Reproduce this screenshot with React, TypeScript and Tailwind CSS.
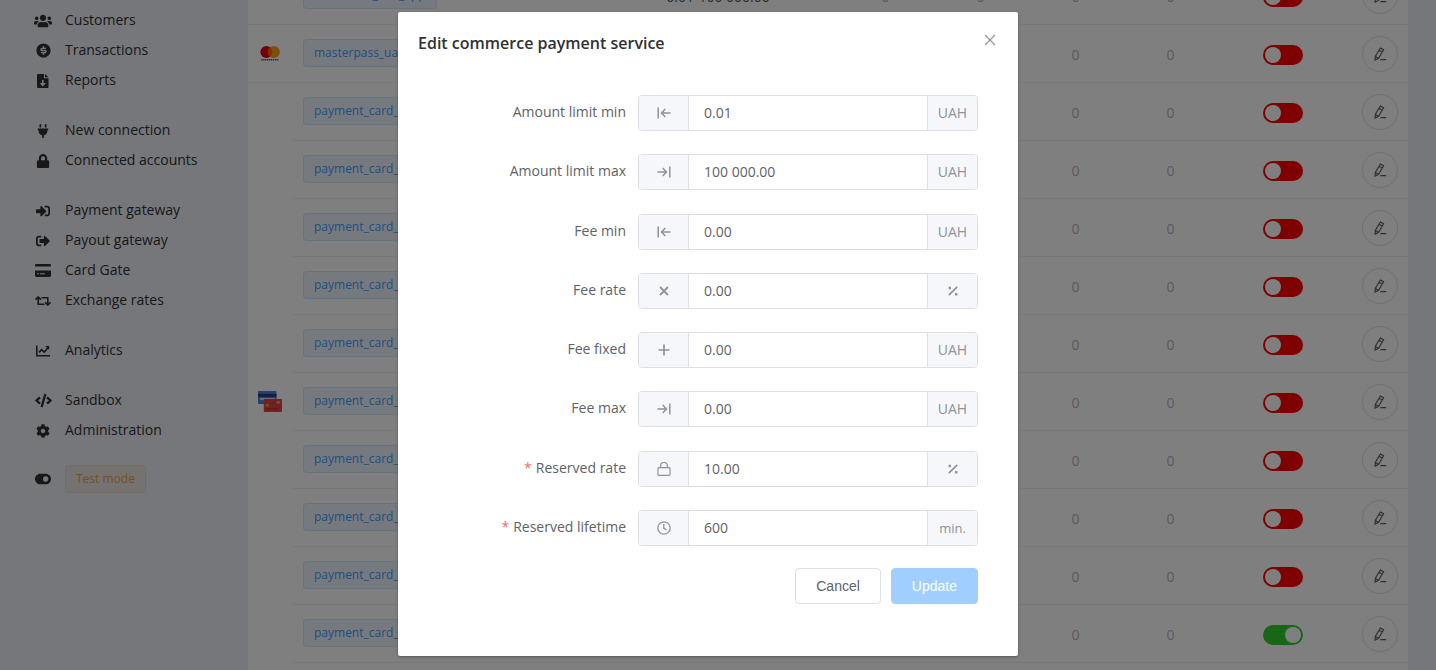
import { useState } from "react";
import type { ReactNode } from "react";
import {
  FaUsers,
  FaPlug,
  FaLock,
  FaSignInAlt,
  FaSignOutAlt,
  FaRetweet,
  FaCode,
  FaCog,
} from "react-icons/fa";
import { FaToggleOn } from "react-icons/fa6";
import { RiMoneyDollarCircleFill } from "react-icons/ri";

function ReportIcon() {
  return (
    <svg viewBox="0 0 12 14" className="h-3.5 w-3" fill="currentColor">
      <path
        fillRule="evenodd"
        d="M1 0h6v4.2h4.5V13a1 1 0 0 1-1 1H1a1 1 0 0 1-1-1V1a1 1 0 0 1 1-1zM5 6v3H2.6L5.8 12.4 9 9H6.6V6z"
      />
      <path d="M8 0l3.5 3.3H8z" />
    </svg>
  );
}

function CardIcon() {
  return (
    <svg viewBox="0 0 16 13" className="h-[13px] w-4" fill="currentColor">
      <path d="M0 2.6V1.2Q0 0 1.2 0h13.6Q16 0 16 1.2v1.4z" />
      <path
        fillRule="evenodd"
        d="M0 6.4h16v5.2q0 1.4-1.2 1.4H1.2Q0 13 0 11.6zM2 9.2v1.1h2V9.2zM5 9.2v1.1h5V9.2z"
      />
    </svg>
  );
}

function TrendIcon() {
  return (
    <svg viewBox="0 0 14 12" className="h-3 w-3.5" fill="none" stroke="currentColor" strokeWidth="1.6">
      <path d="M.8.5v10.2H14" />
      <path d="M3 7.4l2.6-2.8 2.6 2.4 3.6-4" />
      <path d="M9.2 1h4v4z" fill="currentColor" stroke="none" />
    </svg>
  );
}

function MinIcon() {
  return (
    <svg viewBox="0 0 14 14" className="size-3.5" fill="none" stroke="currentColor" strokeWidth="1.5">
      <path d="M1.2 1.5v11M13.5 7H4.6M8.3 3L4.5 7l3.8 4" />
    </svg>
  );
}

function MaxIcon() {
  return (
    <svg viewBox="0 0 14 14" className="size-3.5" fill="none" stroke="currentColor" strokeWidth="1.5">
      <path d="M12.8 1.5v11M.5 7h8.9M5.7 3l3.8 4-3.8 4" />
    </svg>
  );
}

function TimesIcon() {
  return (
    <svg viewBox="0 0 14 14" className="size-3.5" fill="none" stroke="currentColor" strokeWidth="1.8">
      <path d="M3 3l8 8M11 3l-8 8" />
    </svg>
  );
}

function PlusIcon() {
  return (
    <svg viewBox="0 0 14 14" className="size-3.5" fill="none" stroke="currentColor" strokeWidth="1.7">
      <path d="M7 1.5v11M1.5 7h11" />
    </svg>
  );
}

function LockIcon() {
  return (
    <svg viewBox="0 0 14 14" className="size-3.5" fill="none" stroke="currentColor" strokeWidth="1.2">
      <rect x="1" y="5.6" width="12" height="7.8" rx=".8" />
      <path d="M3.6 5.6V3.9a3.4 3.4 0 0 1 6.8 0v1.7" />
    </svg>
  );
}

function ClockIcon() {
  return (
    <svg viewBox="0 0 14 14" className="size-3.5" fill="none" stroke="currentColor" strokeWidth="1.3">
      <circle cx="7" cy="7" r="6.2" />
      <path d="M6.8 3v4.3l2.6 1.6" />
    </svg>
  );
}

function PercentIcon() {
  return (
    <svg viewBox="0 0 14 14" className="size-3.5" fill="none" stroke="currentColor" strokeWidth="1.7">
      <path d="M11.2 2.8l-8.4 8.4" />
      <path d="M2.6 2.8h2.4v2.4H2.6zM9 9h2.4v2.4H9z" fill="currentColor" stroke="none" />
    </svg>
  );
}

function PencilIcon() {
  return (
    <svg viewBox="0 0 14 14" className="size-3.5" fill="none" stroke="currentColor" strokeWidth="1.2">
      <path d="M7.4 1l3.2 1.8-5 8.5-3.5 1.8.2-3.6zM6.1 3.3l3.2 1.8M2.3 9.5l3.3 1.8M7.4 12.7H13.2" />
    </svg>
  );
}

function MastercardLogo() {
  return (
    <svg viewBox="0 0 24 24" className="size-6">
      <circle cx="8.4" cy="10" r="6" fill="#eb001b" />
      <circle cx="15.8" cy="10" r="6" fill="#f79e1b" />
      <path d="M12.1 5.3a6 6 0 0 1 0 9.4a6 6 0 0 1 0-9.4z" fill="#ff5f00" />
      <path d="M3.4 17.8h17.4" stroke="#444" strokeWidth="1.6" strokeDasharray="1.2 .7" />
    </svg>
  );
}

function CardsLogo() {
  return (
    <svg viewBox="0 0 24 24" className="size-6">
      <rect x="0" y="1" width="18.5" height="13" rx="1" fill="#4c80d8" />
      <rect x="0" y="3.9" width="18.5" height="3.2" fill="#303c80" />
      <rect x="2" y="7.9" width="15" height="2.2" fill="#c6d4f0" />
      <rect x="5.8" y="9" width="18.2" height="13" rx="1" fill="#e04340" />
      <rect x="8" y="14.1" width="3" height="2.4" fill="#d8a838" />
      <ellipse cx="20.4" cy="12.3" rx="2.2" ry="1.4" fill="#e8a090" />
      <path d="M8 18.9h12" stroke="#b03038" strokeWidth="1" />
    </svg>
  );
}

const menu: { label: string; icon: ReactNode }[][] = [
  [
    { label: "Customers", icon: <FaUsers className="size-[18px]" /> },
    { label: "Transactions", icon: <RiMoneyDollarCircleFill className="size-[17px]" /> },
    { label: "Reports", icon: <ReportIcon /> },
  ],
  [
    { label: "New connection", icon: <FaPlug className="size-3.5" /> },
    { label: "Connected accounts", icon: <FaLock className="size-3.5" /> },
  ],
  [
    { label: "Payment gateway", icon: <FaSignInAlt className="size-3.5" /> },
    { label: "Payout gateway", icon: <FaSignOutAlt className="size-3.5" /> },
    { label: "Card Gate", icon: <CardIcon /> },
    { label: "Exchange rates", icon: <FaRetweet className="size-4" /> },
  ],
  [{ label: "Analytics", icon: <TrendIcon /> }],
  [
    { label: "Sandbox", icon: <FaCode className="size-[17px]" /> },
    { label: "Administration", icon: <FaCog className="size-3.5" /> },
  ],
];

function Sidebar() {
  return (
    <nav className="w-62 shrink-0 bg-[#edeff6] pt-[5px] text-[#303133]">
      {menu.map((group, i) => (
        <ul key={i} className="mb-5">
          {group.map((item) => (
            <li key={item.label}>
              <a href="#" className="flex h-[30px] items-center pl-[33px] text-sm">
                <span className="mr-3 flex w-5 justify-center pt-px">{item.icon}</span>
                {item.label}
              </a>
            </li>
          ))}
        </ul>
      ))}
      <div className="flex items-center pl-[33px]">
        <span className="mr-3 flex w-5 justify-center">
          <FaToggleOn className="size-4" />
        </span>
        <span className="h-7 rounded border border-[#e6a23c]/20 bg-[#e6a23c]/10 px-2.5 text-xs leading-[26px] text-[#e6a23c]">
          Test mode
        </span>
      </div>
    </nav>
  );
}

type Service = { code: string; logo?: ReactNode; span?: number; on?: boolean };

const services: Service[] = [
  { code: "monocash_uah_app", span: 1 },
  { code: "masterpass_uah", logo: <MastercardLogo />, span: 1 },
  { code: "payment_card_eur", logo: <CardsLogo />, span: 11 },
  { code: "payment_card_gbp" },
  { code: "payment_card_kzt" },
  { code: "payment_card_pln" },
  { code: "payment_card_rub" },
  { code: "payment_card_try" },
  { code: "payment_card_usd" },
  { code: "payment_card_uzs" },
  { code: "payment_card_azn" },
  { code: "payment_card_uah", on: true },
  { code: "payment_card_byn" },
];

const cell = "border-b border-[#ebeef5]";

function ServiceTable() {
  return (
    <table className="-mt-[33px] w-full table-fixed border-separate border-spacing-0 bg-white text-center text-sm text-[#b4b6bb]">
      <colgroup>
        <col className="w-[45px]" />
        <col className="w-[305px]" />
        <col />
        <col className="w-[95px]" />
        <col className="w-[95px]" />
        <col className="w-[95px]" />
        <col className="w-[95px]" />
        <col className="w-[130px]" />
        <col className="w-[60px]" />
      </colgroup>
      <tbody>
        {services.map((s) => (
          <tr key={s.code} className="h-[58px]">
            {s.span && (
              <td rowSpan={s.span} className={`${cell} pr-0.5`}>
                <span className="flex justify-center">{s.logo}</span>
              </td>
            )}
            <td className={`${cell} pb-0.5 pl-2.5 text-left`}>
              <span className="inline-block h-7 rounded border border-[#409eff]/20 bg-[#409eff]/10 px-2.5 align-middle text-xs leading-[26px] text-[#409eff]">
                {s.code}
              </span>
            </td>
            <td className={`${cell} pt-0.5 text-[#606266]`}>0.01-100 000.00</td>
            <td className={`${cell} pt-0.5`}>0</td>
            <td className={`${cell} pt-0.5`}>0</td>
            <td className={`${cell} pt-0.5`}>0</td>
            <td className={`${cell} pt-0.5`}>0</td>
            <td className={`${cell} pt-0.5`}>
              <button
                type="button"
                role="switch"
                aria-checked={!!s.on}
                aria-label={`Enable ${s.code}`}
                className={`inline-flex h-5 w-10 items-center rounded-full px-0.5 align-middle ${
                  s.on ? "justify-end bg-[#32cd32]" : "justify-start bg-[#ff0000]"
                }`}
              >
                <span className="size-4 rounded-full bg-white" />
              </button>
            </td>
            <td className={`${cell} pl-1`}>
              <button
                type="button"
                aria-label={`Edit ${s.code}`}
                className="inline-flex size-9 items-center justify-center rounded-full border border-[#dcdfe6] align-middle text-[#606266]"
              >
                <PencilIcon />
              </button>
            </td>
          </tr>
        ))}
      </tbody>
    </table>
  );
}

type Field = { id: string; label: string; value: string; icon: ReactNode; unit: ReactNode; required?: boolean };

const fields: Field[] = [
  { id: "amount-min", label: "Amount limit min", value: "0.01", icon: <MinIcon />, unit: "UAH" },
  { id: "amount-max", label: "Amount limit max", value: "100 000.00", icon: <MaxIcon />, unit: "UAH" },
  { id: "fee-min", label: "Fee min", value: "0.00", icon: <MinIcon />, unit: "UAH" },
  { id: "fee-rate", label: "Fee rate", value: "0.00", icon: <TimesIcon />, unit: <PercentIcon /> },
  { id: "fee-fixed", label: "Fee fixed", value: "0.00", icon: <PlusIcon />, unit: "UAH" },
  { id: "fee-max", label: "Fee max", value: "0.00", icon: <MaxIcon />, unit: "UAH" },
  { id: "reserved-rate", label: "Reserved rate", value: "10.00", icon: <LockIcon />, unit: <PercentIcon />, required: true },
  {
    id: "reserved-lifetime",
    label: "Reserved lifetime",
    value: "600",
    icon: <ClockIcon />,
    unit: <span className="text-[13px]">min.</span>,
    required: true,
  },
];

function FieldRow({ field }: { field: Field }) {
  const [value, setValue] = useState(field.value);
  return (
    <div className="flex">
      <label htmlFor={field.id} className="flex-1 pr-3 text-right text-sm leading-[34px] text-[#606266]">
        {field.required && <span className="mr-1 text-[#f56c6c]">*</span>}
        {field.label}
      </label>
      <div className="flex h-9 w-[340px] overflow-hidden rounded border border-[#dcdfe6] text-sm text-[#909399]">
        <span className="flex w-[50px] items-center justify-center border-r border-[#dcdfe6] bg-[#f5f7fa]">
          {field.icon}
        </span>
        <input
          id={field.id}
          value={value}
          onChange={(e) => setValue(e.target.value)}
          className="min-w-0 flex-1 bg-white px-[15px] text-[#606266] outline-none"
        />
        <span className="flex w-[50px] items-center justify-center border-l border-[#dcdfe6] bg-[#f5f7fa]">
          {field.unit}
        </span>
      </div>
    </div>
  );
}

function Dialog() {
  return (
    <div
      role="dialog"
      aria-labelledby="dialog-title"
      className="w-[620px] rounded-xs bg-white px-5 pt-5 pb-[52px] shadow-[0_1px_3px_rgba(0,0,0,0.3)]"
    >
      <header className="flex items-start justify-between">
        <h2 id="dialog-title" className="text-base leading-[22px] font-[570] text-[#303133]">
          Edit commerce payment service
        </h2>
        <button type="button" aria-label="Close" className="flex size-4 items-center justify-center text-[#909399]">
          <svg viewBox="0 0 16 16" className="size-4" fill="none" stroke="currentColor" strokeWidth="1.1">
            <path d="M3 3l10 10M13 3L3 13" />
          </svg>
        </button>
      </header>
      <form className="px-5 pt-[41px]" onSubmit={(e) => e.preventDefault()}>
        <div className="flex h-[451px] flex-col justify-between">
          {fields.map((f) => (
            <FieldRow key={f.id} field={f} />
          ))}
        </div>
        <div className="mt-[22px] flex justify-end gap-2.5 font-['Liberation_Sans',sans-serif] text-sm">
          <button type="button" className="h-9 rounded border border-[#dcdfe6] bg-white px-5 text-[#606266]">
            Cancel
          </button>
          <button type="submit" disabled className="h-9 rounded border border-[#a0cfff] bg-[#a0cfff] px-5 text-white">
            Update
          </button>
        </div>
      </form>
    </div>
  );
}

export default function App() {
  return (
    <div className="relative h-screen overflow-hidden font-['Open_Sans',sans-serif]">
      <div className="flex h-full overflow-hidden">
        <Sidebar />
        <main className="min-w-0 flex-1 bg-[#edeff6] pr-7">
          <ServiceTable />
        </main>
      </div>
      <div className="absolute inset-0 flex items-start justify-center bg-black/50 pt-3 pr-5">
        <Dialog />
      </div>
    </div>
  );
}
